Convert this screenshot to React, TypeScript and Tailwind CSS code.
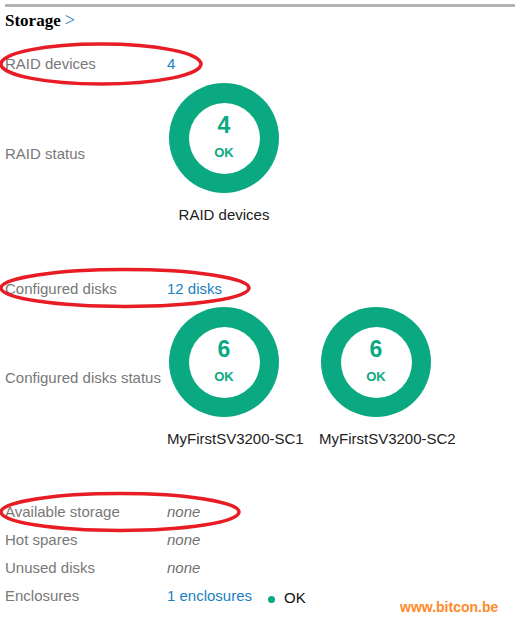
import React from 'react';

const GREEN = 'bg-[#0aa982]';

interface Donut {
  count: number;
  caption: string;
}

function StatusDonut({ count, caption }: Donut) {
  return (
    <div className="w-[114px] flex flex-col items-center">
      <div className={`w-[110px] h-[110px] rounded-full ${GREEN} flex items-center justify-center`}>
        <div className="w-[71px] h-[71px] rounded-full bg-white flex flex-col items-center text-[#0aa982] font-bold">
          <span className="text-[23px] leading-none mt-[11px]">{count}</span>
          <span className="text-[13px] leading-none mt-[9px]">OK</span>
        </div>
      </div>
      <div className="mt-[13px] w-full text-center whitespace-nowrap text-[15px] leading-[17px] text-[#222]">
        {caption}
      </div>
    </div>
  );
}

function Row({ label, children }: { label: string; children: React.ReactNode }) {
  return (
    <div className="flex items-center h-[28px]">
      <div className="w-[162px] text-[#787878]">{label}</div>
      <div className="flex items-center">{children}</div>
    </div>
  );
}

export default function App() {
  return (
    <div
      className="relative w-[515px] h-[620px] bg-white overflow-hidden pl-[5px] pt-[4px] text-[15px] leading-[17px]"
      style={{ fontFamily: '"Liberation Sans", Arial, sans-serif' }}
    >
      {/* header */}
      <div className="border-t-[3px] border-[#b3b3b3]" />
      <div className="mt-[5px] flex items-baseline" style={{ fontFamily: '"Liberation Serif", "Times New Roman", serif' }}>
        <span className="text-[17px] font-bold text-black">Storage</span>
        <span className="ml-[4px] text-[18px] text-[#1b7fc1]">&gt;</span>
      </div>

      {/* RAID */}
      <div className="mt-[20px]">
        <Row label="RAID devices">
          <span className="text-[#1b7fc1]">4</span>
        </Row>
      </div>
      <div className="mt-[6px] flex items-center">
        <div className="w-[162px] text-[#787878]">RAID status</div>
        <StatusDonut count={4} caption="RAID devices" />
      </div>

      {/* configured disks */}
      <div className="mt-[51px]">
        <Row label="Configured disks">
          <span className="text-[#1b7fc1]">12 disks</span>
        </Row>
      </div>
      <div className="mt-[5px] flex items-center">
        <div className="w-[162px] text-[#787878]">Configured disks status</div>
        <div className="flex gap-[38px]">
          <StatusDonut count={6} caption="MyFirstSV3200-SC1" />
          <StatusDonut count={6} caption="MyFirstSV3200-SC2" />
        </div>
      </div>

      {/* other storage */}
      <div className="mt-[50px]">
        <Row label="Available storage">
          <span className="italic text-[#707070]">none</span>
        </Row>
        <Row label="Hot spares">
          <span className="italic text-[#707070]">none</span>
        </Row>
        <Row label="Unused disks">
          <span className="italic text-[#707070]">none</span>
        </Row>
        <Row label="Enclosures">
          <span className="text-[#1b7fc1]">1 enclosures</span>
          <span className="ml-[16px] mt-[9px] w-[7px] h-[7px] rounded-full bg-[#0aa982]" />
          <span className="ml-[9px] mt-[4px] text-[#111]">OK</span>
        </Row>
      </div>

      {/* watermark */}
      <div className="absolute left-[400px] top-[599px] text-[14px] font-bold text-[#ff8a2a]">www.bitcon.be</div>

      {/* red annotation ellipses */}
      <svg className="absolute left-0 top-0 pointer-events-none" width="515" height="620">
        <ellipse cx="101" cy="64" rx="100" ry="20" fill="none" stroke="#e81c24" strokeWidth="3.5" />
        <ellipse cx="125" cy="288" rx="124" ry="18.5" fill="none" stroke="#e81c24" strokeWidth="3.5" />
        <ellipse cx="120" cy="512" rx="119" ry="18.5" fill="none" stroke="#e81c24" strokeWidth="3.5" />
      </svg>
    </div>
  );
}
